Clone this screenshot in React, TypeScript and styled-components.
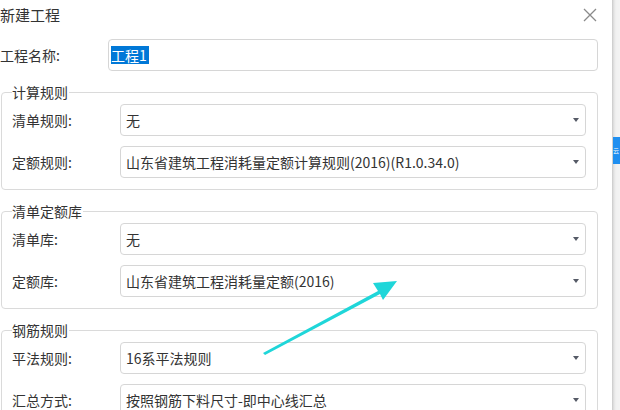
import React from "react";
import styled, { createGlobalStyle } from "styled-components";

const Global = createGlobalStyle`
  html, body { margin: 0; padding: 0; background: #ffffff; }
  body {
    width: 620px; height: 410px; overflow: hidden;
    font-family: "Noto Sans CJK SC", "Noto Sans", "Liberation Sans", sans-serif;
    color: #333333;
  }
  * { box-sizing: border-box; }
`;

const Screen = styled.div`
  display: flex;
  width: 620px;
  height: 410px;
  overflow: hidden;
  position: relative;
`;

const Dialog = styled.div`
  width: 612px;
  height: 410px;
  flex: none;
  background: #ffffff;
  padding: 0 14px 0 0;
  overflow: hidden;
`;

const Side = styled.div`
  flex: 1;
  background: linear-gradient(to right, #c9c9c9 0px, #e4e4e4 2px, #f1f1f1 4px, #f3f3f3 100%);
  display: flex;
  flex-direction: column;
  padding-top: 137px;
`;

const SideButton = styled.div`
  height: 27px;
  margin-left: 1px;
  background: #1f8ff0;
  color: #ffffff;
  font-size: 6px;
  line-height: 27px;
  overflow: hidden;
  white-space: nowrap;
  padding-left: 0;
`;

const TitleBar = styled.div`
  height: 30px;
  display: flex;
  align-items: center;
  justify-content: space-between;
  margin-bottom: 9px;
`;

const Title = styled.div`
  font-size: 15px;
  color: #333;
  line-height: 20px;
`;

const Close = styled.button`
  width: 16px;
  height: 16px;
  border: none;
  background: transparent;
  padding: 0;
  margin-right: 0px;
  display: flex;
  align-items: center;
  justify-content: center;
  cursor: pointer;
`;

const Row = styled.div`
  display: flex;
  align-items: center;
  height: 32px;
  flex: none;
`;

const Label = styled.label`
  width: 108px;
  flex: none;
  font-size: 14px;
  color: #333;
  line-height: 20px;
`;

const TextBox = styled.div`
  flex: 1;
  height: 32px;
  border: 1px solid #d6d6d6;
  border-radius: 4px;
  padding-left: 2px;
  display: flex;
  align-items: center;
  font-size: 14px;
`;

const Selected = styled.span`
  background: #0078d7;
  color: #ffffff;
  line-height: 18px;
  padding-right: 2px;
`;

const Group = styled.fieldset`
  margin: 11px 0 0 1px;
  border: 1px solid #dadada;
  border-radius: 4px;
  padding: 2px 11px 11px 10px;
  display: flex;
  flex-direction: column;
  gap: 10px;
  min-width: 0;
`;

const Legend = styled.legend`
  font-size: 14px;
  line-height: 20px;
  padding: 0 1px 0 0;
  color: #333;
`;

const Select = styled.div`
  flex: 1;
  height: 32px;
  border: 1px solid #d6d6d6;
  border-radius: 4px;
  padding: 0 0 0 5px;
  display: flex;
  align-items: center;
  justify-content: space-between;
  font-size: 14px;
  color: #333;
  white-space: nowrap;
`;

const Caret = styled.span`
  width: 0;
  height: 0;
  border-left: 3.5px solid transparent;
  border-right: 3.5px solid transparent;
  border-top: 4px solid #555a66;
  margin-right: 6px;
`;

const ArrowLayer = styled.svg`
  position: absolute;
  left: 0;
  top: 0;
  pointer-events: none;
`;

const SelectRow: React.FC<{ label: string; value: string }> = ({ label, value }) => (
  <Row>
    <Label>{label}</Label>
    <Select>
      <span>{value}</span>
      <Caret />
    </Select>
  </Row>
);

export default function App() {
  return (
    <>
      <Global />
      <Screen>
        <Dialog>
          <TitleBar>
            <Title>新建工程</Title>
            <Close aria-label="close">
              <svg width="14" height="14" viewBox="0 0 14 14">
                <path d="M1 1L13 13M13 1L1 13" stroke="#8a8a8a" strokeWidth="1.3" fill="none" />
              </svg>
            </Close>
          </TitleBar>
          <Row>
            <Label>工程名称:</Label>
            <TextBox>
              <Selected>工程1</Selected>
            </TextBox>
          </Row>
          <Group>
            <Legend>计算规则</Legend>
            <SelectRow label="清单规则:" value="无" />
            <SelectRow label="定额规则:" value="山东省建筑工程消耗量定额计算规则(2016)(R1.0.34.0)" />
          </Group>
          <Group>
            <Legend>清单定额库</Legend>
            <SelectRow label="清单库:" value="无" />
            <SelectRow label="定额库:" value="山东省建筑工程消耗量定额(2016)" />
          </Group>
          <Group>
            <Legend>钢筋规则</Legend>
            <SelectRow label="平法规则:" value="16系平法规则" />
            <SelectRow label="汇总方式:" value="按照钢筋下料尺寸-即中心线汇总" />
          </Group>
        </Dialog>
        <Side>
          <SideButton>云</SideButton>
        </Side>
        <ArrowLayer width="620" height="410" viewBox="0 0 620 410">
          <polygon
            points="263,353 378,291 373,283 397,281 383,300 380,294 265,355"
            fill="#1fd6d9"
          />
        </ArrowLayer>
      </Screen>
    </>
  );
}
